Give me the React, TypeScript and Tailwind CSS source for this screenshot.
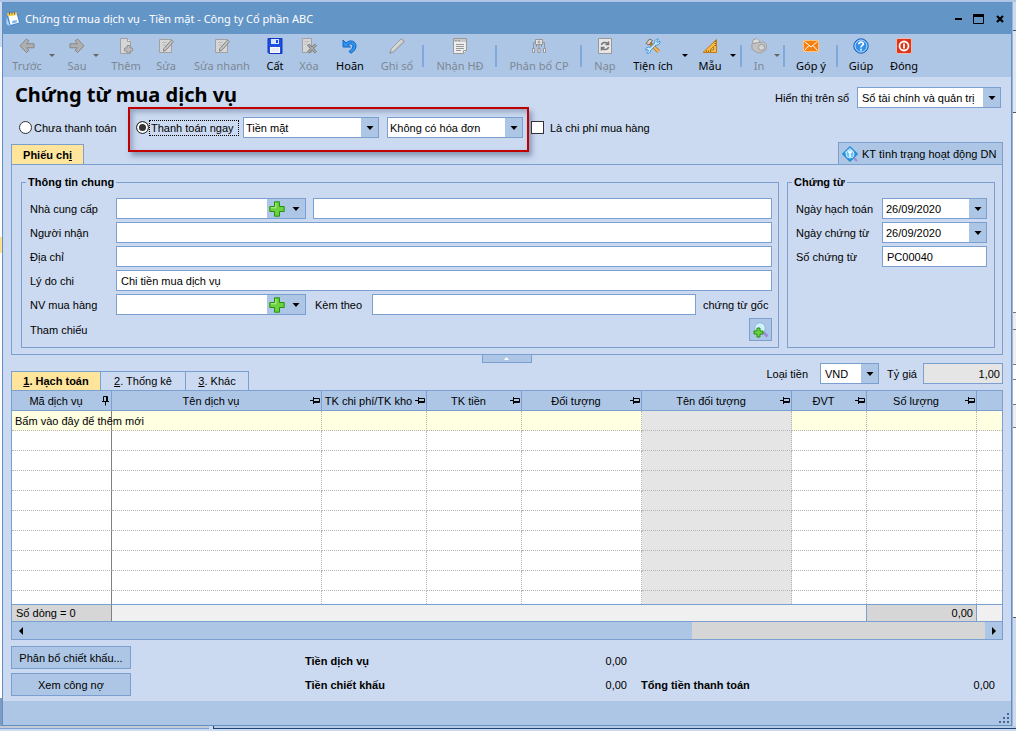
import React, { ReactNode } from "react";

const gray = "#858585";

function Svg({ children }: { children: ReactNode }) {
  return (
    <svg width="16" height="16" viewBox="0 0 16 16" fill="none" aria-hidden="true" className="shrink-0">
      {children}
    </svg>
  );
}

const ArrowLeftIcon = () => (
  <Svg>
    <path d="M7.500 1 1 7.800l6.500 6.700 2.500-2.200-2.500-2.500H15V5.800H7.500L10 3.200z" fill="#b0b0b0" stroke={gray} />
  </Svg>
);
const ArrowRightIcon = () => (
  <Svg>
    <path d="m8.500 1 6.500 6.800-6.500 6.700L6 12.300l2.500-2.500H1V5.800h7.500L6 3.200z" fill="#b0b0b0" stroke={gray} />
  </Svg>
);
const PageBase = () => <path d="M2.500.5h7l3 3v12h-10z" fill="#d6d6d6" stroke="#a0a0a0" />;
const PageAddIcon = () => (
  <Svg>
    <PageBase />
    <path d="M9.500.5v3h3" fill="#eee" stroke="#a0a0a0" />
    <path d="M9 7.500h3v2.500h2.500v3H12v2H9v-2H6.500v-3H9z" fill="#bdbdbd" stroke="#949494" />
  </Svg>
);
const PageEditIcon = () => (
  <Svg>
    <path d="M1.500 1.500h12v13h-12z" fill="#d6d6d6" stroke="#a0a0a0" />
    <path d="M4 4.500h5M4 7h4" stroke="#bbb" />
    <path d="m13.500 2 1.800 1.800-7.500 8.500-2.500.8.600-2.500z" fill="#c4c4c4" stroke="#858585" />
  </Svg>
);
const PageDeleteIcon = () => (
  <Svg>
    <path d="M1.500.5h9v14h-9z" fill="#d6d6d6" stroke="#a0a0a0" />
    <path d="M3.500 3.500h5M3.500 6h3" stroke="#bbb" />
    <path d="m7 6.500 8 8m0-8-8 8" stroke="#808080" strokeWidth="3" />
    <path d="m7 6.500 8 8m0-8-8 8" stroke="#c9c9c9" />
  </Svg>
);
const SaveIcon = () => (
  <Svg>
    <path d="M1 .5h14v15H2l-1-1z" fill="#1f4fe0" stroke="#1034c4" />
    <path d="M4 1h8v5H4z" fill="#d7e6ff" />
    <path d="M9 2h2v3H9z" fill="#1f4fe0" />
    <path d="M3 9h10v6H3z" fill="#fff" />
    <path d="M4 11h8M4 13h8" stroke="#cfd9ee" />
  </Svg>
);
const UndoIcon = () => (
  <Svg>
    <path d="M1 2v7h7.500L6 6.800c2.500-2 5.500-.4 4.800 2.200-.4 1.800-1.800 3-3.800 4.300l1.800 2C12 13.500 14 11 14 8c0-4.800-6-7-10-3z" fill="#2f93ee" stroke="#1168c8" />
  </Svg>
);
const PencilIcon = () => (
  <Svg>
    <path d="m12.500.8 2.700 2.700L4.500 14 .8 15.200l1.400-3.900z" fill="#cfcfcf" stroke="#8e8e8e" />
    <path d="m3 11.500 9-9" stroke="#efefef" />
  </Svg>
);
const InvoiceIcon = () => (
  <Svg>
    <path d="M1.500.5h13v12l-3 3h-10z" fill="#eee" stroke="#999" />
    <path d="M2 1h12v3H2z" fill="#c9c9c9" />
    <path d="M3 2.500h2m1 0h2M4 6.500h8M4 8.500h8M4 10.500h8M4 12.500h5" stroke="#999" />
    <path d="M11.500 15v-2.500h3" stroke="#999" fill="#fff" />
  </Svg>
);
const AllocateIcon = () => (
  <Svg>
    <path d="M4.500 1.500h7v5h-7z" fill="#e4e4e4" stroke="#959595" />
    <path d="M8 2.500v3M6.500 4h3M8 7v3M4.500 4.500h-2v5.500M11.500 4.500h2v5.500M5.500 7v2m5-2v2" stroke="#959595" />
    <path d="M1.500 10.500h2v4h-2zM7 10.500h2v4H7zM12.500 10.500h2v4h-2z" fill="#eee" stroke="#959595" />
  </Svg>
);
const ReloadIcon = () => (
  <Svg>
    <path d="M1.500.5h13v15h-13z" fill="#e6e6e6" stroke="#999" />
    <path d="M4.500 7c.5-3 5-3.500 6.500-1M11.500 3.500v3h-3M11.500 9c-.5 3-5 3.500-6.500 1M4.500 12.500v-3h3" stroke="#777" strokeWidth="1.500" />
  </Svg>
);
const ToolsIcon = () => (
  <Svg>
    <path d="m5 5 8.500 8.500" stroke="#b97320" strokeWidth="3.500" />
    <path d="m7 7 6.500 6.500" stroke="#ffb54d" strokeWidth="2" />
    <path d="M1 5.500 4.500 1l3 1.500L4 7z" fill="#d7d2c7" stroke="#776c5c" />
    <path d="M15 3c.5 3-2 4.500-4 4l-5.500 5.500c.4 2.500-2 3.500-4 2.500l2-2-1-1.500-2 .5C.5 9.500 3 8.500 5 9.500L9.800 5C9 2.500 11 .8 13.500 1.200l-2 2 1 1.500z" fill="#c8e6fb" stroke="#479bd6" />
  </Svg>
);
const TriangleIcon = () => (
  <Svg>
    <path d="M14.500 1.500v13H1z" fill="#f9bd43" stroke="#c37b16" />
    <path d="M11.500 8.500v3.500H8z" fill="#adc6e5" stroke="#c37b16" />
    <path d="M12.500 3.500h1.500m-1.500 2h1.500m-1.500 2h1.500M4.500 12.500V14m2-1.500V14m2-1.500V14" stroke="#9a5b0c" />
  </Svg>
);
const PrintIcon = () => (
  <Svg>
    <path d="M1.500 5 2 2l4-1.500L8.500 3v3z" fill="#ddd" stroke="#a2a2a2" />
    <path d="m.8 6 6-1.500 6-.5 2.500 2.500v5L10 15l-4-.5L1 11z" fill="#c2c2c2" stroke="#a0a0a0" />
    <circle cx="10.500" cy="9.500" r="3" fill="#d6d6d6" stroke="#999" />
  </Svg>
);
const MailIcon = () => (
  <Svg>
    <path d="M.5 2.500h15v11H.5z" fill="#f5800f" stroke="#ffc27e" />
    <path d="m1.500 3.500 6.500 5.500 6.500-5.500M1.500 12.500 6 7.500m8.500 5-4.500-5" stroke="#fff" />
  </Svg>
);
const HelpIcon = () => (
  <Svg>
    <circle cx="8" cy="8" r="7.200" fill="#3590ea" stroke="#1b5fb8" />
    <circle cx="8" cy="8" r="6" stroke="#b9dcff" />
    <path d="M5.800 6.300C6 3.200 10.500 3.500 10.200 6.200 10 7.700 8 7.800 8 9.500M8 10.800v1.700" stroke="#fff" strokeWidth="1.700" />
  </Svg>
);
const CloseIcon = () => (
  <Svg>
    <rect x=".5" y=".5" width="15" height="15" rx="1.500" fill="#d8371e" stroke="#f2b7a9" />
    <circle cx="8" cy="8" r="4.500" stroke="#fff" strokeWidth="1.800" />
    <path d="M8 5.500v5" stroke="#fff" strokeWidth="1.800" />
  </Svg>
);
const PlusIcon = () => (
  <Svg>
    <path d="M5.500.8h5v4.700h4.700v5h-4.700v4.700h-5v-4.700H.8v-5h4.700z" fill="#6bd13f" stroke="#249011" />
    <path d="M6.800 2v4.800H2" stroke="#b9f09b" />
  </Svg>
);
const SearchAddIcon = () => (
  <Svg>
    <path d="m10.500 10.500 4 4" stroke="#9a8cd8" strokeWidth="3" />
    <circle cx="7" cy="6" r="5.300" fill="#d5f0fd" stroke="#7fbbe6" />
    <path d="M4 6h3v3h3v3H7v3H4v-3H1V9h3z" fill="#6bd13f" stroke="#249011" />
  </Svg>
);
const CompanyIcon = () => (
  <Svg>
    <path d="M8 .5 15.500 8 8 15.500.5 8z" fill="#2797e3" stroke="#1878c4" />
    <path d="M8 1.500 11 4.500 5 7 2.500 6.800z" fill="#8dd6fb" />
    <circle cx="8" cy="8" r="4" fill="#6cc3f3" stroke="#c8efff" />
    <path d="M6 6h4M8 6v5" stroke="#fff" strokeWidth="1.500" />
    <path d="m12 12 3 3" stroke="#9a8cd8" strokeWidth="2" />
  </Svg>
);
const AppIcon = () => (
  <Svg>
    <path d="m1 5 12-2.500 2 9L5 15.500 2.500 13z" fill="#3f86dc" />
    <path d="m3 3.500 8.500-1.500 2.500 9.500L5.500 14z" fill="#fdfdf4" />
    <path d="m2 2.500 9.500-1.200.5 2.700-9.200 1.500z" fill="#f7cf4d" />
    <path d="M4.500.8v3M7 .5v3m2.500-3v3" stroke="#6f6a5a" />
    <path d="m1.500 5 3.500 10.500L1.500 13z" fill="#b8d6f6" />
    <path d="m7 10 5-1-.5 2.500-4 1z" fill="#7db4f0" />
  </Svg>
);

function Caret() {
  return (
    <svg width="8" height="4" viewBox="0 0 8 4" aria-hidden="true" className="shrink-0">
      <path d="M.5 0h7L4 4z" fill="#000" />
    </svg>
  );
}

function Pin({ upright = false }: { upright?: boolean }) {
  return (
    <svg width="11" height="11" viewBox="0 0 11 11" fill="none" stroke="#000" aria-hidden="true" className="shrink-0">
      {upright ? (
        <path d="M3.500 7V1.500h4V7M6.500 1.500V7M2 6.500h7M5.500 7v3.500" />
      ) : (
        <path d="M3.500 2v7M4 3.500h5.500v4H4M4 6.500h5.500M0 5.500h3.500" />
      )}
    </svg>
  );
}

type Tool = { label: string; icon: ReactNode; width: string; off?: boolean };

function ToolButton({ label, icon, width, off }: Tool) {
  return (
    <button
      type="button"
      disabled={off}
      className={`${width} flex h-full shrink-0 flex-col items-center gap-1 pt-1 font-['Noto_Sans','Open_Sans',sans-serif] text-[11px] leading-4 whitespace-nowrap ${off ? "text-[#7d8694]" : "text-black"}`}
    >
      {icon}
      <span>{label}</span>
    </button>
  );
}

function ToolCaret({ label, off, className = "" }: { label: string; off?: boolean; className?: string }) {
  return (
    <button type="button" aria-label={label} disabled={off} className={`flex h-full w-2 shrink-0 items-center justify-center ${className}`}>
      <svg width="6" height="3" viewBox="0 0 6 3" aria-hidden="true">
        <path d="M0 0h6L3 3z" fill={off ? "#666" : "#000"} />
      </svg>
    </button>
  );
}

const Separator = ({ className = "" }: { className?: string }) => (
  <span className={`mr-px h-[22px] w-0.5 shrink-0 bg-[#7fa9dd] ${className}`} />
);

function Select({ id, label, value, className, tight }: { id: string; label?: string; value: string; className: string; tight?: boolean }) {
  return (
    <div className={`grid h-[21px] shrink-0 grid-cols-[1fr_17px] border border-[#7ba0cf] bg-white ${className}`}>
      <select
        id={id}
        aria-label={label}
        className={`col-span-2 col-start-1 row-start-1 h-[19px] min-w-0 appearance-none bg-transparent pr-4 leading-4 outline-none ${tight ? "pl-0.5" : "pl-1"}`}
      >
        <option>{value}</option>
      </select>
      <span className="pointer-events-none col-start-2 row-start-1 flex items-center justify-center bg-[#adc6e5]">
        <Caret />
      </span>
    </div>
  );
}

const inputBox = "h-[21px] min-w-0 border border-[#7ba0cf] bg-white px-1 leading-4 outline-none";

function Lookup({ id, label }: { id: string; label: string }) {
  return (
    <div className="flex h-[21px] w-[190px] shrink-0 border border-[#7ba0cf] bg-[#adc6e5]">
      <input id={id} className="min-w-0 flex-1 bg-white px-1 outline-none" />
      <button type="button" aria-label={`Thêm ${label}`} className="flex w-5 items-center justify-center">
        <PlusIcon />
      </button>
      <button type="button" aria-label={`Chọn ${label}`} className="flex w-[18px] items-center justify-center">
        <Caret />
      </button>
    </div>
  );
}

function DateBox({ id, label }: { id: string; label: string }) {
  return (
    <div className="flex items-center">
      <label htmlFor={id} className="w-[86px] shrink-0">{label}</label>
      <div className="flex h-[21px] min-w-0 flex-1 border border-[#7ba0cf] bg-[#adc6e5]">
        <input id={id} defaultValue="26/09/2020" className="min-w-0 flex-1 bg-white px-[3px] outline-none" />
        <button type="button" aria-label={`Chọn ${label}`} className="flex w-[17px] shrink-0 items-center justify-center">
          <Caret />
        </button>
      </div>
    </div>
  );
}

function Field({ id, label, value = "" }: { id: string; label: string; value?: string }) {
  return (
    <div className="flex items-center">
      <label htmlFor={id} className="w-[86px] shrink-0">{label}</label>
      <input id={id} defaultValue={value} className={`${inputBox} flex-1`} />
    </div>
  );
}

const columns = [
  { title: "Mã dịch vụ", col: "w-[100px]" },
  { title: "Tên dịch vụ", col: "w-[210px]" },
  { title: "TK chi phí/TK kho", col: "w-[105px]" },
  { title: "TK tiền", col: "w-[95px]" },
  { title: "Đối tượng", col: "w-[120px]" },
  { title: "Tên đối tượng", col: "w-[150px]" },
  { title: "ĐVT", col: "w-[75px]" },
  { title: "Số lượng", col: "w-[110px]" },
  { title: "", col: "" },
];

function cellBorder(i: number) {
  if (i === 0) return "border-r border-r-[#808080]";
  if (i === 8) return "";
  return "border-r border-r-[#b5b5b5] [border-right-style:dotted]";
}

function Grid() {
  return (
    <div className="border border-[#7ba0cf] bg-white">
      <table className="w-full table-fixed border-separate border-spacing-0">
        <colgroup>
          {columns.map((c, i) => (
            <col key={i} className={c.col} />
          ))}
        </colgroup>
        <thead>
          <tr className="bg-[#adc6e5]">
            {columns.map((c, i) => (
              <th key={i} className={`h-5 border-b border-[#7ba0cf] p-0 font-normal ${i < 8 ? "border-r" : ""}`}>
                {c.title && (
                  <div className="flex items-center">
                    <span className="flex-1 text-center whitespace-nowrap">{c.title}</span>
                    <Pin upright={i === 0} />
                  </div>
                )}
              </th>
            ))}
          </tr>
        </thead>
        <tbody>
          <tr>
            {columns.map((_, i) => (
              <td
                key={i}
                className={`h-5 border-b border-b-[#b5b5b5] p-0 whitespace-nowrap [border-bottom-style:dotted] ${i === 5 ? "bg-[#e5e5e5]" : "bg-[#ffffe1]"} ${cellBorder(i)}`}
              >
                {i === 0 && <span className="relative z-10 block w-0 pl-[3px]">Bấm vào đây để thêm mới</span>}
              </td>
            ))}
          </tr>
          {Array.from({ length: 9 }, (_, r) => (
            <tr key={r}>
              {columns.map((_, i) => (
                <td
                  key={i}
                  className={`p-0 ${r === 8 ? "h-[13px]" : "h-5 border-b border-b-[#b5b5b5] [border-bottom-style:dotted]"} ${i === 5 ? "bg-[#e5e5e5]" : ""} ${cellBorder(i)}`}
                />
              ))}
            </tr>
          ))}
        </tbody>
        <tfoot>
          <tr className="bg-[#f0f0f0]">
            <td className="h-[18px] border-y border-r border-[#7ba0cf] border-r-[#808080] bg-[#d6d6d6] p-0 pl-1 leading-4">Số dòng = 0</td>
            <td colSpan={6} className="border-y border-r border-[#7ba0cf] p-0" />
            <td className="border-y border-r border-[#7ba0cf] bg-[#d6d6d6] p-0 pr-[3px] text-right leading-4">0,00</td>
            <td className="border-y border-[#7ba0cf] p-0" />
          </tr>
        </tfoot>
      </table>
      <div className="flex h-[17px] bg-[#adc6e5]">
        <button type="button" aria-label="Cuộn trái" className="flex w-[17px] items-center justify-center">
          <svg width="4" height="8" viewBox="0 0 4 8"><path d="M4 0v8L0 4z" /></svg>
        </button>
        <div className="flex flex-1">
          <div className="w-[69.3%]" />
          <div className="flex-1 bg-[#d6d6d6]" />
        </div>
        <button type="button" aria-label="Cuộn phải" className="flex w-[17px] items-center justify-center">
          <svg width="4" height="8" viewBox="0 0 4 8"><path d="M0 0v8l4-4z" /></svg>
        </button>
      </div>
    </div>
  );
}

function Toolbar() {
  return (
    <div role="toolbar" className="flex h-[43px] items-center bg-[#adc6e5] pl-[3px]">
      <ToolButton label="Trước" icon={<ArrowLeftIcon />} width="w-[42px]" off />
      <ToolCaret label="Danh sách trước" off />
      <ToolButton label="Sau" icon={<ArrowRightIcon />} width="ml-1.5 w-[30px]" off />
      <ToolCaret label="Danh sách sau" off />
      <ToolButton label="Thêm" icon={<PageAddIcon />} width="ml-1 w-11" off />
      <ToolButton label="Sửa" icon={<PageEditIcon />} width="w-9" off />
      <ToolButton label="Sửa nhanh" icon={<PageEditIcon />} width="w-[76px]" off />
      <ToolButton label="Cất" icon={<SaveIcon />} width="w-[30px]" />
      <ToolButton label="Xóa" icon={<PageDeleteIcon />} width="w-[38px]" off />
      <ToolButton label="Hoãn" icon={<UndoIcon />} width="w-11" />
      <ToolButton label="Ghi sổ" icon={<PencilIcon />} width="w-[50px]" off />
      <Separator />
      <ToolButton label="Nhận HĐ" icon={<InvoiceIcon />} width="w-[70px]" off />
      <Separator />
      <ToolButton label="Phân bổ CP" icon={<AllocateIcon />} width="w-[82px]" off />
      <Separator />
      <ToolButton label="Nạp" icon={<ReloadIcon />} width="w-11" off />
      <ToolButton label="Tiện ích" icon={<ToolsIcon />} width="w-[52px]" />
      <ToolCaret label="Các tiện ích" className="ml-0.5" />
      <ToolButton label="Mẫu" icon={<TriangleIcon />} width="ml-0.5 w-[38px]" />
      <ToolCaret label="Các mẫu" />
      <Separator className="ml-[3px]" />
      <ToolButton label="In" icon={<PrintIcon />} width="ml-0.5 w-7" off />
      <ToolCaret label="Tùy chọn in" off />
      <Separator className="ml-0.5" />
      <ToolButton label="Góp ý" icon={<MailIcon />} width="w-[50px]" />
      <Separator />
      <ToolButton label="Giúp" icon={<HelpIcon />} width="w-11" />
      <ToolButton label="Đóng" icon={<CloseIcon />} width="w-[42px]" />
    </div>
  );
}

function Radio({ id, checked }: { id: string; checked?: boolean }) {
  return (
    <input
      id={id}
      type="radio"
      name="payment"
      defaultChecked={checked}
      className="size-[13px] shrink-0 appearance-none rounded-full border border-[#333] bg-white checked:bg-[#333] checked:shadow-[inset_0_0_0_2px_white]"
    />
  );
}

const legend = "ml-1 px-0.5 text-[11px] leading-[14px] font-bold";

export default function App() {
  return (
    <div className="flex min-h-screen flex-col bg-[#cbdaf0] font-['Liberation_Sans',Arial,sans-serif] text-[11px] leading-4 text-black">
      <div className="h-0.5 bg-[#adc6e5]" />
      <div className="flex flex-1">
        <div className="flex w-0.5 flex-col">
          <div className="h-[45px] bg-[#cbdaf0]" />
          <div className="h-[190px] bg-white" />
          <div className="h-4 bg-[#ffe08c]" />
          <div className="flex-1 bg-white" />
          <div className="h-7 bg-[#7f9cc0]" />
        </div>
        <div className="flex min-w-0 flex-1 flex-col border border-[#6090c4] bg-[#cbdaf0]">
          <header className="flex h-[31px] items-center bg-[#6495c7] pr-px pl-0.5 text-white">
            <AppIcon />
            <h1 className="ml-1 flex-1 font-['Noto_Sans','Open_Sans',sans-serif] text-[11px] leading-4">
              Chứng từ mua dịch vụ - Tiền mặt - Công ty Cổ phần ABC
            </h1>
            <button type="button" aria-label="Thu nhỏ" className="flex size-5 items-center justify-center">
              <svg width="7" height="2"><path d="M0 0h7v2H0z" fill="#000" /></svg>
            </button>
            <button type="button" aria-label="Phóng to" className="flex size-5 items-center justify-center">
              <svg width="11" height="10" fill="none" stroke="#000"><path d="M.5 1.500h10v8H.5z" /><path d="M0 1.500h11" strokeWidth="3" /></svg>
            </button>
            <button type="button" aria-label="Đóng cửa sổ" className="ml-0.5 flex size-5 items-center justify-center">
              <svg width="8" height="8" stroke="#000" strokeWidth="2.200"><path d="m1 1 6 6m0-6L1 7" /></svg>
            </button>
          </header>
          <Toolbar />

          <main className="flex flex-1 flex-col px-2">
            <div className="flex h-10 items-start justify-between pr-0.5 pl-1">
              <h2 className="pt-1 font-['Noto_Sans','Open_Sans',sans-serif] text-xl leading-7 font-bold">Chứng từ mua dịch vụ</h2>
              <div className="flex items-center gap-2 pt-2.5">
                <label htmlFor="book">Hiển thị trên sổ</label>
                <Select id="book" value="Sổ tài chính và quản trị" className="w-[144px]" />
              </div>
            </div>

            <div className="flex h-[21px] items-center pl-2">
              <Radio id="unpaid" />
              <label htmlFor="unpaid" className="ml-0.5 w-[102px]">Chưa thanh toán</label>
              <div className="relative flex items-center">
                <div className="pointer-events-none absolute -top-2.5 -right-1.5 -bottom-3.5 -left-2 border-2 border-[#c00000] shadow-[3px_4px_5px_rgba(70,90,130,0.5),inset_3px_3px_5px_rgba(70,90,130,0.4)]" />
                <Radio id="paid" checked />
                <label htmlFor="paid" className="w-[90px] border border-dotted border-black pl-px leading-[14px]">Thanh toán ngay</label>
                <Select id="method" label="Phương thức" value="Tiền mặt" className="ml-1 w-[136px]" tight />
                <Select id="invoice" label="Hóa đơn" value="Không có hóa đơn" className="ml-2 w-[136px]" tight />
              </div>
              <input id="cost" type="checkbox" className="relative ml-2 size-[13px] appearance-none border border-[#333] bg-white checked:bg-[#333]" />
              <label htmlFor="cost" className="ml-1.5">Là chi phí mua hàng</label>
            </div>

            <div className="flex items-end justify-between pt-1">
              <button type="button" className="h-5 w-[73px] border border-b-0 border-[#7ba0cf] bg-[#ffe59b] font-bold">
                Phiếu ch<u>i</u>
              </button>
              <button type="button" className="flex h-[22px] w-[165px] items-center gap-1 border border-b-0 border-[#7ba0cf] bg-[#adc6e5] pl-[3px] whitespace-nowrap">
                <CompanyIcon />
                KT tình trạng hoạt động DN
              </button>
            </div>

            <section className="flex gap-2 border border-[#7ba0cf] pt-2.5 pr-[7px] pb-1.5 pl-[9px]">
              <fieldset className="min-w-0 flex-1 border border-[#7ba0cf] pb-1.5">
                <legend className={legend}>Thông tin chung</legend>
                <div className="flex flex-col gap-[3px] pt-[9px] pr-1.5 pl-2">
                  <div className="flex items-center">
                    <label htmlFor="supplier" className="w-[86px] shrink-0">Nhà cung cấp</label>
                    <Lookup id="supplier" label="nhà cung cấp" />
                    <input aria-label="Tên nhà cung cấp" className={`${inputBox} ml-[7px] flex-1`} />
                  </div>
                  <Field id="receiver" label="Người nhận" />
                  <Field id="address" label="Địa chỉ" />
                  <Field id="reason" label="Lý do chi" value="Chi tiền mua dịch vụ" />
                  <div className="flex items-center">
                    <label htmlFor="buyer" className="w-[86px] shrink-0">NV mua hàng</label>
                    <Lookup id="buyer" label="nhân viên" />
                    <label htmlFor="attach" className="ml-[9px] w-[57px] shrink-0">Kèm theo</label>
                    <input id="attach" className={`${inputBox} flex-1`} />
                    <span className="w-[76px] shrink-0 pl-[7px]">chứng từ gốc</span>
                  </div>
                  <div className="flex items-center justify-between">
                    <span>Tham chiếu</span>
                    <button type="button" aria-label="Thêm tham chiếu" className="flex size-[23px] items-center justify-center border border-[#7ba0cf] bg-[#adc6e5]">
                      <SearchAddIcon />
                    </button>
                  </div>
                </div>
              </fieldset>
              <fieldset className="w-[208px] min-w-0 shrink-0 border border-[#7ba0cf]">
                <legend className={legend}>Chứng từ</legend>
                <div className="flex flex-col gap-[3px] pt-[9px] pr-[7px] pl-2">
                  <DateBox id="posted" label="Ngày hạch toán" />
                  <DateBox id="issued" label="Ngày chứng từ" />
                  <Field id="number" label="Số chứng từ" value="PC00040" />
                </div>
              </fieldset>
            </section>

            <div className="grid grid-cols-3 items-start">
              <div className="flex h-[35px] items-end">
                <button type="button" className="h-[19px] w-[90px] shrink-0 border border-b-0 border-[#7ba0cf] bg-[#ffe59b] font-bold whitespace-nowrap"><u>1</u>. Hạch toán</button>
                <button type="button" className="h-[19px] w-[85px] shrink-0 border-t border-r border-[#7ba0cf] whitespace-nowrap"><u>2</u>. Thống kê</button>
                <button type="button" className="h-[19px] w-[63px] shrink-0 border-t border-r border-[#7ba0cf] whitespace-nowrap"><u>3</u>. Khác</button>
              </div>
              <button type="button" aria-label="Thu gọn" className="flex h-2 w-[50px] items-center justify-center justify-self-center border border-t-0 border-[#7ba0cf] bg-[#adc6e5]">
                <svg width="5" height="3"><path d="M0 3h5L2.500 0z" fill="#fff" /></svg>
              </button>
              <div className="flex items-center justify-end pt-2 whitespace-nowrap">
                <label htmlFor="currency" className="mr-3">Loại tiền</label>
                <Select id="currency" value="VND" className="w-[59px]" />
                <label htmlFor="rate" className="mr-1.5 ml-2">Tỷ giá</label>
                <input id="rate" defaultValue="1,00" className="h-[21px] w-20 border border-[#7ba0cf] bg-[#e5e5e5] px-0.5 text-right outline-none" />
              </div>
            </div>
            <Grid />

            <div className="flex items-end pt-1.5 pb-[5px]">
              <div className="flex w-[120px] flex-col gap-1">
                <button type="button" className="h-[23px] border border-[#7ba0cf] bg-[#adc6e5]">Phân bổ chiết khấu...</button>
                <button type="button" className="h-[23px] border border-[#7ba0cf] bg-[#adc6e5]">Xem công nợ</button>
              </div>
              <dl className="ml-[174px] grid w-[322px] grid-cols-[1fr_auto] gap-y-2 pb-[3px]">
                <dt className="font-bold">Tiền dịch vụ</dt>
                <dd>0,00</dd>
                <dt className="font-bold">Tiền chiết khấu</dt>
                <dd>0,00</dd>
              </dl>
              <dl className="ml-3.5 flex flex-1 justify-between pr-2 pb-[3px]">
                <dt className="font-bold">Tổng tiền thanh toán</dt>
                <dd>0,00</dd>
              </dl>
            </div>
          </main>

          <footer className="flex h-6 items-end justify-end bg-[#adc6e5] p-px">
            <svg width="11" height="11" fill="#456795" aria-hidden="true">
              <path d="M8 0h2v2H8zM4 4h2v2H4zM8 4h2v2H8zM0 8h2v2H0zM4 8h2v2H4zM8 8h2v2H8z" />
            </svg>
          </footer>
        </div>
        <div className="flex w-1 flex-col border-l border-[#a3b3c9]">
          <div className="h-7 bg-[#cbdaf0]" />
          <div className="h-[82px] border-t border-[#35507f] bg-[#dce7f5]" />
          <div className="h-[200px] border-t border-[#555] bg-white" />
          <div className="h-[17px] border-t border-[#777] bg-[#eee]" />
          <div className="h-[35px] border-t border-[#777] bg-[#eee]" />
          <div className="h-4 border-y border-[#777] bg-white" />
          <div className="h-[24px] bg-white" />
          <div className="h-6 border-y border-[#777] bg-[#eee]" />
          <div className="h-[190px] border-b border-[#555] bg-white" />
          <div className="flex-1 bg-[#cbdaf0]" />
        </div>
      </div>
      <div className="flex h-[5px] items-start">
        <div className="h-[3px] w-[209px] border-b border-[#7ba0cf] bg-[#c5cbd5]" />
        <div className="ml-1 h-[3px] flex-1 border-b border-l border-[#1f4476] bg-[#b8cbe5]" />
      </div>
    </div>
  );
}
